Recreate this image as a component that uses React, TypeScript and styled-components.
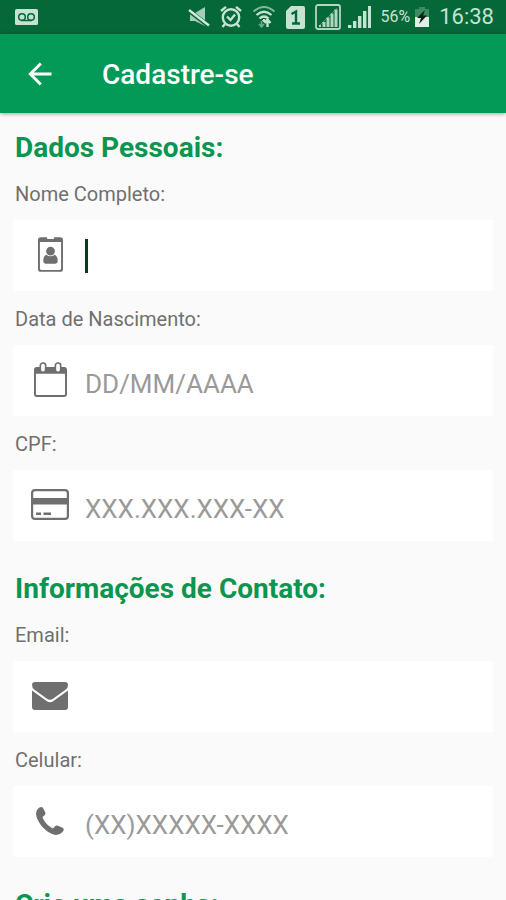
import React from "react";
import styled, { createGlobalStyle } from "styled-components";

const GlobalStyle = createGlobalStyle`
  * { box-sizing: border-box; }
  body {
    margin: 0;
    background: #fafafa;
    font-family: Roboto, "Liberation Sans", sans-serif;
  }
`;

const Screen = styled.div`
  display: flex;
  flex-direction: column;
  height: 100vh;
`;

const StatusBar = styled.div`
  flex: none;
  display: flex;
  align-items: center;
  justify-content: space-between;
  height: 34px;
  padding: 0 12px 0 15px;
  background: #056839;
  color: #c5e2d2;
`;

const StatusGroup = styled.div`
  display: flex;
  align-items: center;
  gap: 10px;
`;

const SignalGroup = styled.div`
  display: flex;
  align-items: center;
  gap: 7px;
`;

const Battery = styled.div`
  display: flex;
  align-items: center;
  gap: 5px;
  font-size: 16px;
  line-height: 24px;
`;

const Clock = styled.time`
  font-size: 22px;
  line-height: 34px;
`;

const AppBar = styled.header`
  flex: none;
  display: flex;
  align-items: center;
  gap: 40px;
  height: 79px;
  padding: 2px 18px 0;
  background: #039a58;
  color: #fff;
  box-shadow: 0 1px 4px rgba(0, 0, 0, 0.35);
  z-index: 1;
`;

const BackButton = styled.button`
  display: flex;
  align-items: center;
  justify-content: center;
  width: 44px;
  height: 44px;
  padding: 0 0 2px;
  border: 0;
  background: none;
  color: inherit;
  cursor: pointer;
`;

const Title = styled.h1`
  margin: 0;
  font-size: 28px;
  font-weight: 500;
  line-height: 32px;
`;

const Form = styled.form`
  flex: 1;
  min-height: 0;
  overflow-y: auto;
  scrollbar-width: none;
  padding: 19px 13px;
`;

const Section = styled.section`
  & + & {
    margin-top: 32px;
  }
`;

const SectionTitle = styled.h2`
  margin: 0 2px 18px;
  color: #0b9550;
  font-size: 28px;
  font-weight: 700;
  line-height: 32px;
`;

const Field = styled.div`
  & + & {
    margin-top: 16px;
  }
`;

const Label = styled.label`
  display: block;
  margin: 0 2px 14px;
  color: #707070;
  font-size: 20px;
  line-height: 24px;
`;

const InputCard = styled.div`
  display: flex;
  align-items: center;
  height: 71px;
  background: #fff;
  border-radius: 2px;
`;

const IconSlot = styled.span`
  flex: none;
  display: flex;
  justify-content: center;
  width: 72px;
  padding: 0 0 2px 2px;
  color: #6f6f6f;
`;

const Caret = styled.span`
  flex: none;
  width: 3px;
  height: 34px;
  background: #0b3d1c;
`;

const TextInput = styled.input`
  flex: 1;
  min-width: 0;
  height: 100%;
  padding: 6px 12px 0 0;
  border: 0;
  outline: 0;
  background: none;
  color: #333;
  caret-color: #0b3d1c;
  font-family: inherit;
  font-size: 26px;

  &::placeholder {
    color: #9a9a9a;
    opacity: 1;
  }
`;

const Voicemail = () => (
  <svg width="23" height="16" viewBox="0 0 23 16">
    <rect width="23" height="16" rx="1.5" fill="#c5e2d2" />
    <g fill="none" stroke="#056839" strokeWidth="1.5">
      <circle cx="7" cy="8" r="3.3" />
      <circle cx="16" cy="8" r="3.3" />
      <path d="M6 11.5H17" />
    </g>
  </svg>
);

const Muted = () => (
  <svg width="22" height="20" viewBox="0 0 22 20">
    <path d="M2 6H7L17 0V19L7 14H2Z" fill="#a5cdb7" />
    <path d="M0 3L21 19" stroke="#056839" strokeWidth="4.5" />
    <path d="M1 3L21 18.5" stroke="#d3e9dd" strokeWidth="2.4" />
  </svg>
);

const Alarm = () => (
  <svg width="22" height="24" viewBox="0 0 22 24" fill="none" stroke="#c5e2d2" strokeWidth="2.4">
    <circle cx="11" cy="12.5" r="8.2" />
    <path d="M7 11.5L10.5 15L15 9.5M1 6L6 1.8M21 6L16 1.8M5 19L2.5 22M17 19L19.5 22" />
  </svg>
);

const Wifi = () => (
  <svg width="24" height="24" viewBox="0 0 24 24" fill="none" stroke="#c5e2d2">
    <path d="M1.5 6.5Q12-2.5 22.5 6.5" strokeWidth="2" opacity=".65" />
    <path d="M4.5 10Q12 3.5 19.5 10M7.5 13.5Q12 9.5 16.5 13.5" strokeWidth="2.3" />
    <path d="M10.5 15.5L12 14L13.5 15.5L12 17Z" fill="#c5e2d2" />
    <path d="M15.5 22V16M12.5 18L15.5 14.5L18.5 18" strokeWidth="2.4" />
    <path d="M9.5 16V22M7 19L9.5 22L12 19" strokeWidth="1.6" opacity=".55" />
  </svg>
);

const Sim = () => (
  <svg width="19" height="23" viewBox="0 0 19 23">
    <path d="M5 0H17Q19 0 19 2V21Q19 23 17 23H2Q0 23 0 21V5Z" fill="#c5e2d2" />
    <path d="M5.5 8L10 5.5V17M6 17.5H14" fill="none" stroke="#056839" strokeWidth="2.4" />
  </svg>
);

const bars = [
  [0, 19],
  [5, 15],
  [10, 10],
  [15, 5],
  [20, 0],
];

const Signal = ({ boxed = false }: { boxed?: boolean }) =>
  boxed ? (
    <svg width="26" height="26" viewBox="0 0 26 26">
      <rect x="1" y="1" width="24" height="24" rx="2" fill="none" stroke="#b3d6c3" strokeWidth="1.8" />
      <path d="M4 22L22 4" stroke="#4f9672" strokeWidth="1" />
      <path d="M4 23V21H6V23ZM7.500 23V18H10.500V23ZM11.500 23V13.500H14.500V23ZM15.500 23V9.500H18.500V23ZM19.500 23V5.500H22.500V23Z" fill="#b3d6c3" />
    </svg>
  ) : (
    <svg width="23" height="22" viewBox="0 0 23 22">
      {bars.map(([x, y]) => (
        <rect key={x} x={x} y={y} width="3.4" height={22 - y} fill="#c5e2d2" />
      ))}
    </svg>
  );

const BatteryIcon = () => (
  <svg width="14" height="20" viewBox="0 0 14 20">
    <path d="M4 0H10V2H14V10H0V2H4Z" fill="#3d8b63" />
    <path d="M0 10H14V20H0Z" fill="#e0f0e7" />
    <path d="M10 3L2 11H6L4 17L12 8.500H8Z" fill="#0b2316" />
  </svg>
);

const BackArrow = () => (
  <svg width="24" height="24" viewBox="0 0 24 24" fill="none" stroke="currentColor" strokeWidth="2.9">
    <path d="M23.500 12H3M12.800 1.500L2.300 12L12.800 22.500" />
  </svg>
);

const Badge = () => (
  <svg width="25" height="35" viewBox="0 0 26 36" fill="currentColor">
    <path fillRule="evenodd" d="M3 0H9.500V2H16.500V0H23Q26 0 26 3V33Q26 36 23 36H3Q0 36 0 33V3Q0 0 3 0ZM2 5V32.500Q2 34 3.500 34H22.500Q24 34 24 32.500V5Z" />
    <circle cx="13" cy="14.500" r="4.500" />
    <path d="M8.500 18.200Q13 21.500 17.500 18.200Q20.500 19.500 20.500 25Q20.500 27.500 18 27.500H8Q5.500 27.500 5.500 25Q5.500 19.500 8.500 18.200Z" />
  </svg>
);

const Calendar = () => (
  <svg width="33" height="35" viewBox="0 0 34 36">
    <path d="M3 6H31Q33 6 33 8V33Q33 35 31 35H3Q1 35 1 33V8Q1 6 3 6Z" fill="#fff" stroke="currentColor" strokeWidth="2" />
    <path d="M1 6H33V12H1Z" fill="currentColor" />
    <g fill="#fff" stroke="currentColor" strokeWidth="1.700">
      <rect x="6.500" y="1" width="5.500" height="9.500" rx="2.500" />
      <rect x="22" y="1" width="5.500" height="9.500" rx="2.500" />
    </g>
  </svg>
);

const Card = () => (
  <svg width="38" height="31" viewBox="0 0 38 31">
    <rect x="1.100" y="1.100" width="35.800" height="28.800" rx="3" fill="none" stroke="currentColor" strokeWidth="2.200" />
    <path d="M1 9H37V15.500H1Z" fill="currentColor" />
    <path d="M5 24.700H10M12.500 24.700H20" stroke="currentColor" strokeWidth="2.400" />
  </svg>
);

const Envelope = () => (
  <svg width="36" height="28" viewBox="0 0 36 28" fill="currentColor">
    <path d="M3 0H33Q36 0 36 3Q36 6 33.500 7.700L21 16.700Q18 19 15 16.700L2.500 7.700Q0 6 0 3Q0 0 3 0Z" />
    <path d="M0 8.500L14.500 19Q18 21.500 21.500 19L36 8.500V25Q36 28 33 28H3Q0 28 0 25Z" />
  </svg>
);

const Phone = () => (
  <svg width="28" height="28" viewBox="0 0 28 28" fill="currentColor">
    <path d="M1.500 2.200Q5-1.300 7 1L9.300 5.500Q10.200 7.800 7.300 9.300Q6.200 10 7 11.500Q9.500 17 15.500 20.700Q17.200 21.800 18 20.600Q19.500 17.600 22 18.700L26.500 20.700Q29 22 26.500 25Q23.500 28.500 18.500 27.800Q12.500 26.500 6.500 20Q.5 13 0 7Q0 4 1.500 2.200Z" />
  </svg>
);

interface FieldData {
  id: string;
  label: string;
  placeholder?: string;
  type?: string;
  caret?: boolean;
  icon: React.ReactNode;
}

const sections: { title: string; fields: FieldData[] }[] = [
  {
    title: "Dados Pessoais:",
    fields: [
      { id: "nome", label: "Nome Completo:", caret: true, icon: <Badge /> },
      { id: "nascimento", label: "Data de Nascimento:", placeholder: "DD/MM/AAAA", icon: <Calendar /> },
      { id: "cpf", label: "CPF:", placeholder: "XXX.XXX.XXX-XX", icon: <Card /> },
    ],
  },
  {
    title: "Informações de Contato:",
    fields: [
      { id: "email", label: "Email:", type: "email", icon: <Envelope /> },
      { id: "celular", label: "Celular:", placeholder: "(XX)XXXXX-XXXX", type: "tel", icon: <Phone /> },
    ],
  },
  { title: "Crie uma senha:", fields: [] },
];

export default function App() {
  return (
    <>
      <GlobalStyle />
      <Screen>
        <StatusBar>
          <Voicemail />
          <StatusGroup>
            <Muted />
            <Alarm />
            <Wifi />
            <Sim />
            <SignalGroup>
              <Signal boxed />
              <Signal />
            </SignalGroup>
            <Battery>
              56%
              <BatteryIcon />
            </Battery>
            <Clock>16:38</Clock>
          </StatusGroup>
        </StatusBar>
        <AppBar>
          <BackButton type="button" aria-label="Voltar">
            <BackArrow />
          </BackButton>
          <Title>Cadastre-se</Title>
        </AppBar>
        <Form>
          {sections.map((section) => (
            <Section key={section.title}>
              <SectionTitle>{section.title}</SectionTitle>
              {section.fields.map((field) => (
                <Field key={field.id}>
                  <Label htmlFor={field.id}>{field.label}</Label>
                  <InputCard>
                    <IconSlot>{field.icon}</IconSlot>
                    {field.caret && <Caret />}
                    <TextInput id={field.id} type={field.type ?? "text"} placeholder={field.placeholder} />
                  </InputCard>
                </Field>
              ))}
            </Section>
          ))}
        </Form>
      </Screen>
    </>
  );
}
